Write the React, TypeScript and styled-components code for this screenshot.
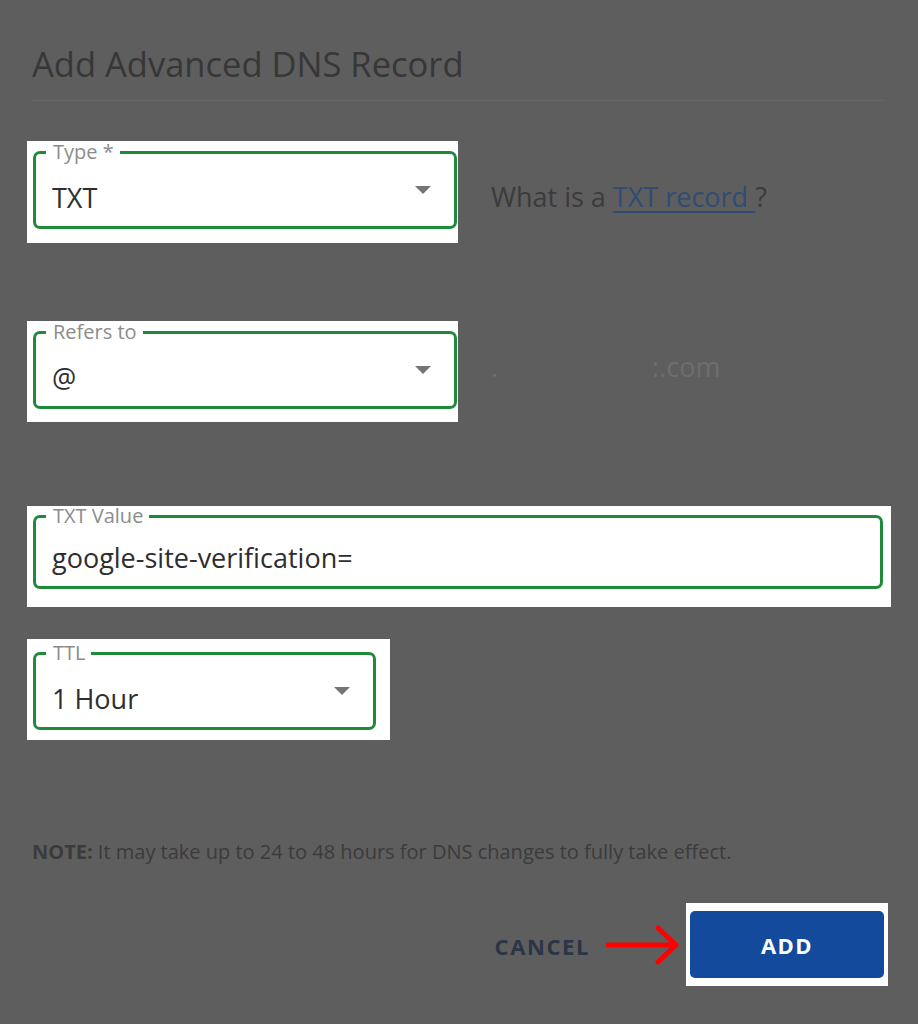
import React from "react";
import styled, { createGlobalStyle } from "styled-components";

const Global = createGlobalStyle`
  html, body {
    margin: 0;
    background: #5e5e5e;
  }
  body {
    font-family: "Open Sans", "Noto Sans", Arial, sans-serif;
  }
`;

const Page = styled.div`
  width: 918px;
  height: 1024px;
  box-sizing: border-box;
  padding: 0 27px 0 27px;
  background: #5e5e5e;
  overflow: hidden;
`;

const Title = styled.h2`
  margin: 0 0 0 5px;
  padding-top: 43px;
  font-size: 34.5px;
  line-height: 42px;
  font-weight: 400;
  color: #373737;
`;

const Divider = styled.hr`
  margin: 15px 7px 0 5px;
  border: 0;
  border-top: 1px solid #666666;
`;

const Row = styled.div<{ $top: number }>`
  display: flex;
  align-items: flex-start;
  margin-top: ${(p) => p.$top}px;
`;

const Highlight = styled.div<{ $pad: string }>`
  background: #ffffff;
  padding: ${(p) => p.$pad};
`;

const Field = styled.fieldset<{ $width: number; $height?: number }>`
  box-sizing: border-box;
  width: ${(p) => p.$width}px;
  height: ${(p) => p.$height ?? 87}px;
  margin: 0;
  padding: 0 23px 0 16px;
  border: 3px solid #1f8b3a;
  border-radius: 7px;
`;

const Label = styled.legend`
  margin-left: -6px;
  padding: 0 6px 0 7px;
  font-size: 20px;
  line-height: 20px;
  color: #8c8c8c;
`;

const Inner = styled.div`
  display: flex;
  align-items: center;
  height: 62px;
`;

const Value = styled.span<{ $shift?: number }>`
  font-size: 27px;
  color: #2e2e2e;
  padding-top: ${(p) => p.$shift ?? 8}px;
`;

const Caret = styled.span`
  margin-left: auto;
  width: 0;
  height: 0;
  border-left: 8px solid transparent;
  border-right: 8px solid transparent;
  border-top: 8px solid #757575;
  margin-bottom: 6px;
`;

const Helper = styled.div`
  margin: 39px 0 0 33px;
  font-size: 27px;
  line-height: 34px;
  color: #3b3b3b;
  white-space: pre;
`;

const Link = styled.a`
  color: #304c75;
  text-decoration: underline;
  text-decoration-thickness: 2px;
  text-underline-offset: 4px;
`;

const Domain = styled.div`
  margin: 29px 0 0 33px;
  font-size: 27px;
  line-height: 34px;
  color: #6e6e6e;
  display: flex;
  gap: 154px;
`;

const Note = styled.p`
  margin: 99px 0 0 5px;
  font-size: 20px;
  line-height: 26px;
  color: #3b3b3b;
  b {
    font-weight: 700;
  }
`;

const Actions = styled.div`
  display: flex;
  align-items: center;
  justify-content: flex-end;
  margin-top: 38px;
  padding-right: 3px;
`;

const Cancel = styled.button`
  background: none;
  border: 0;
  padding: 0;
  font-family: inherit;
  font-size: 22px;
  font-weight: 700;
  letter-spacing: 1.6px;
  color: #2b3547;
  margin-top: 3px;
`;

const ArrowIcon = styled.svg`
  margin: 0 6px 0 16px;
  display: block;
`;

const Primary = styled.button`
  display: block;
  width: 194px;
  height: 67px;
  border: 0;
  border-radius: 5px;
  background: #134a9b;
  color: #ffffff;
  font-family: inherit;
  font-size: 22px;
  font-weight: 700;
  letter-spacing: 1.5px;
`;

const Select = ({ label, value, width }: { label: string; value: string; width: number }) => (
  <Field $width={width}>
    <Label>{label}</Label>
    <Inner>
      <Value>{value}</Value>
      <Caret />
    </Inner>
  </Field>
);

export default function App() {
  return (
    <Page>
      <Global />
      <Title>Add Advanced DNS Record</Title>
      <Divider />

      <Row $top={40}>
        <Highlight $pad="1px 1px 14px 6px">
          <Select label="Type *" value="TXT" width={424} />
        </Highlight>
        <Helper>
          What is a <Link href="#">TXT record </Link>?
        </Helper>
      </Row>

      <Row $top={78}>
        <Highlight $pad="1px 1px 13px 6px">
          <Select label="Refers to" value="@" width={424} />
        </Highlight>
        <Domain>
          <span>.</span>
          <span>:.com</span>
        </Domain>
      </Row>

      <Row $top={84}>
        <Highlight $pad="0 8px 18px 6px">
          <Field $width={850} $height={83}>
            <Label>TXT Value</Label>
            <Inner>
              <Value $shift={0}>google-site-verification=</Value>
            </Inner>
          </Field>
        </Highlight>
      </Row>

      <Row $top={32}>
        <Highlight $pad="4px 14px 10px 6px">
          <Select label="TTL" value="1 Hour" width={343} />
        </Highlight>
      </Row>

      <Note>
        <b>NOTE:</b> It may take up to 24 to 48 hours for DNS changes to fully take effect.
      </Note>

      <Actions>
        <Cancel>CANCEL</Cancel>
        <ArrowIcon width="74" height="40" viewBox="0 0 74 40">
          <path d="M2 20 H70 M52 3 L70 20 L52 37" fill="none" stroke="#ff0000" strokeWidth="5" strokeLinecap="round" strokeLinejoin="round" />
        </ArrowIcon>
        <Highlight $pad="8px 4px">
          <Primary>ADD</Primary>
        </Highlight>
      </Actions>
    </Page>
  );
}
